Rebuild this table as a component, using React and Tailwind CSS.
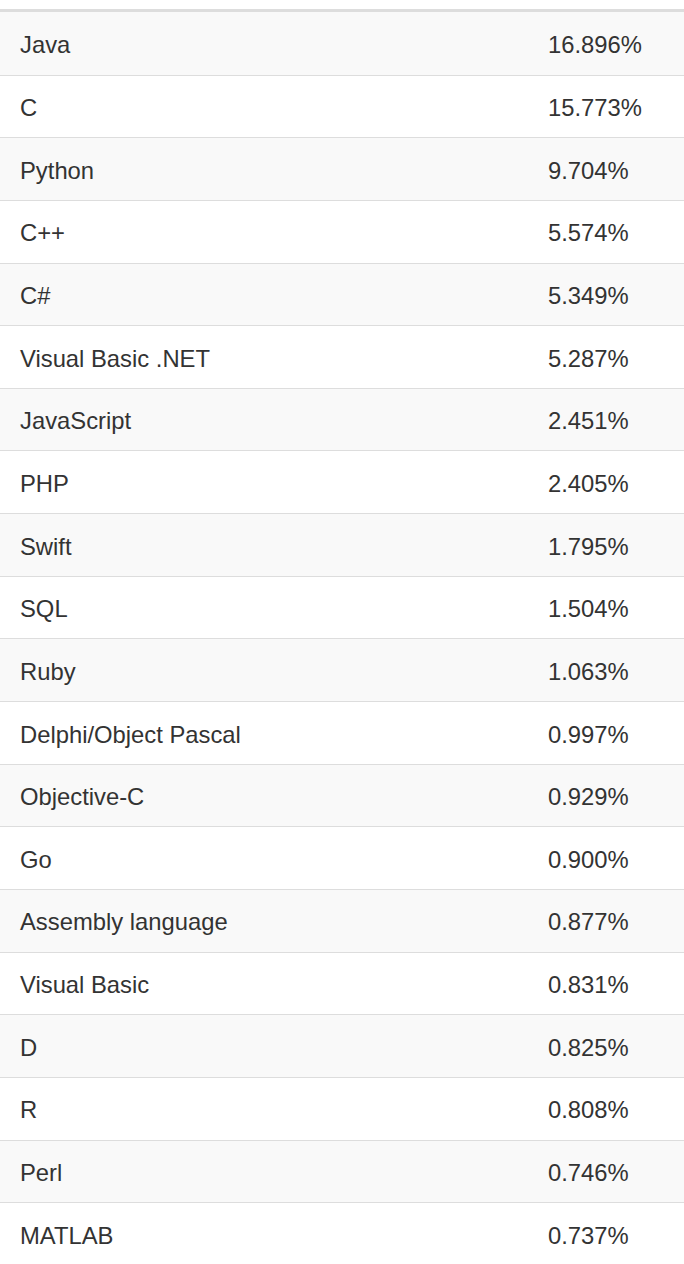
import React from 'react';

const rows = [
  ['Java', '16.896%'],
  ['C', '15.773%'],
  ['Python', '9.704%'],
  ['C++', '5.574%'],
  ['C#', '5.349%'],
  ['Visual Basic .NET', '5.287%'],
  ['JavaScript', '2.451%'],
  ['PHP', '2.405%'],
  ['Swift', '1.795%'],
  ['SQL', '1.504%'],
  ['Ruby', '1.063%'],
  ['Delphi/Object Pascal', '0.997%'],
  ['Objective-C', '0.929%'],
  ['Go', '0.900%'],
  ['Assembly language', '0.877%'],
  ['Visual Basic', '0.831%'],
  ['D', '0.825%'],
  ['R', '0.808%'],
  ['Perl', '0.746%'],
  ['MATLAB', '0.737%'],
];

export default function App() {
  return (
    <div className="min-h-screen bg-white pt-[9px] text-[#333] text-[23.8px] font-['Liberation_Sans',Arial,sans-serif]">
      <div className="border-t-[3px] border-[#ddd]">
        {rows.map(([lang, pct], i) => (
          <div
            key={lang}
            className={`grid grid-cols-[528px_1fr] items-center h-[62.65px] pt-[3px] border-[#ddd] ${i > 0 ? 'border-t' : ''} ${i % 2 === 0 ? 'bg-[#f9f9f9]' : 'bg-white'}`}
          >
            <div className="pl-[20px]">{lang}</div>
            <div className="pl-[20px]">{pct}</div>
          </div>
        ))}
      </div>
    </div>
  );
}
